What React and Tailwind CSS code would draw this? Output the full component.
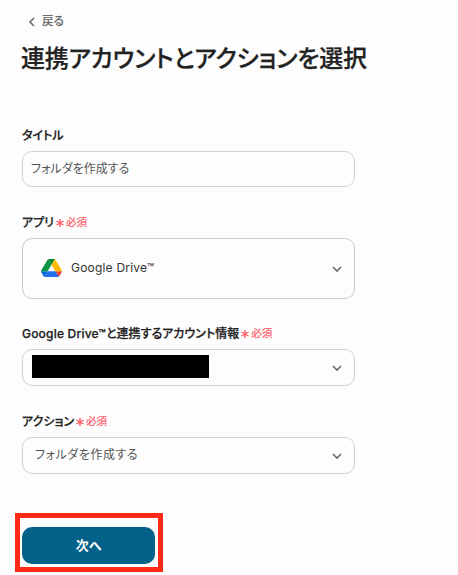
import React from "react";

const Chevron = ({ className, d }) => (
  <svg
    className={className}
    viewBox="0 0 10 10"
    fill="none"
    stroke="#6b6b6b"
    strokeWidth="1.6"
  >
    <path d={d} />
  </svg>
);

const DriveIcon = () => (
  <svg className="w-[21px] h-[18px] shrink-0 -mt-px" viewBox="0 0 87.3 78" preserveAspectRatio="none">
    <path
      d="m6.6 66.85 3.85 6.65c.8 1.4 1.95 2.5 3.3 3.3l13.75-23.8h-27.5c0 1.55.4 3.1 1.2 4.5z"
      fill="#0066da"
    />
    <path
      d="m43.65 25-13.75-23.8c-1.35.8-2.5 1.9-3.3 3.3l-25.4 44a9.06 9.06 0 0 0-1.2 4.5h27.5z"
      fill="#0b9444"
    />
    <path
      d="m73.55 76.8c1.35-.8 2.5-1.9 3.3-3.3l1.6-2.75 7.65-13.25c.8-1.4 1.2-2.95 1.2-4.5h-27.5l5.85 11.5z"
      fill="#ea4335"
    />
    <path
      d="m43.65 25 13.75-23.8c-1.35-.8-2.9-1.2-4.5-1.2h-18.5c-1.6 0-3.15.45-4.5 1.2z"
      fill="#00832d"
    />
    <path
      d="m59.8 53h-32.3l-13.75 23.8c1.35.8 2.9 1.2 4.5 1.2h50.8c1.6 0 3.15-.45 4.5-1.2z"
      fill="#2070f0"
    />
    <path
      d="m73.4 26.5-12.7-22c-.8-1.4-1.95-2.5-3.3-3.3l-13.75 23.8 16.15 28h27.45c0-1.55-.4-3.1-1.2-4.5z"
      fill="#ffba00"
    />
  </svg>
);

const Required = () => (
  <span className="flex items-center ml-[2px] text-[#ff5a66] text-[10.5px] font-normal [-webkit-text-stroke:0.2px]">
    <svg
      className="w-2 h-2 mr-[2px]"
      viewBox="0 0 8 8"
      stroke="currentColor"
      strokeWidth="1.4"
    >
      <path d="M4 0v8M.5 2l7 4M7.5 2l-7 4" />
    </svg>
    必須
  </span>
);

const Label = ({ children, required }) => (
  <div className="h-5 mt-px mb-[5px] flex items-center text-[12px] leading-5 font-medium [-webkit-text-stroke:0.25px] text-[#222] whitespace-nowrap">
    <span>{children}</span>
    {required && <Required />}
  </div>
);

const Arrow = () => (
  <Chevron className="w-[10px] h-[10px] ml-auto" d="M1 3l4 4 4-4" />
);

const App = () => {
  return (
    <main className="w-full h-[575px] overflow-hidden bg-[#fdfdfd] pl-[22px] pt-[11px] text-[#222] font-['Inter','Noto_Sans_CJK_JP',sans-serif] [font-feature-settings:'palt']">
      <div className="h-5 pl-[5px] flex items-center text-[12px] leading-5 font-medium text-[#6b6b6b] [-webkit-text-stroke:0.15px]">
        <Chevron className="w-[10px] h-[10px] mr-[5px] mt-[2px]" d="M7 1L3 5l4 4" />
        <span className="text-[11.5px]">戻る</span>
      </div>
      <h1 className="h-9 mt-[10px] mb-12 -ml-px text-[24px] leading-9 font-medium tracking-[-0.22px] [-webkit-text-stroke:0.25px] whitespace-nowrap">
        連携アカウントとアクションを選択
      </h1>

      <div className="w-[333px] flex flex-col text-[12px] text-[#555]">
        <Label>タイトル</Label>
        <div className="h-9 mb-[25px] px-[8px] flex items-center border border-[#cdd1dc] rounded-[10px]">
          <span className="-mt-px">フォルダを作成する</span>
        </div>

        <Label required>アプリ</Label>
        <div className="h-[61px] mb-6 pl-[18px] pr-3 flex items-center border border-[#c9cacd] rounded-[10px] text-[#333]">
          <DriveIcon />
          <span className="ml-[9px] -mt-px tracking-[0.2px]">Google Drive™</span>
          <Arrow />
        </div>

        <Label required>
          <span className="tracking-[0.2px]">Google Drive™</span>
          と連携するアカウント情報
        </Label>
        <div className="h-[37px] mb-[25px] pl-[9px] pr-3 flex items-center border border-[#cdd1dc] rounded-[10px]">
          <div className="w-[177px] h-[23px] mb-[3px] bg-black" />
          <Arrow />
        </div>

        <Label required>アクション</Label>
        <div className="h-[37px] pl-3 pr-3 flex items-center border border-[#cdd1dc] rounded-[10px]">
          <span className="-mt-px tracking-[0.55px]">フォルダを作成する</span>
          <Arrow />
        </div>
      </div>

      <div className="w-[148px] h-[59px] mt-[39px] -ml-[7px] flex border-[5px] border-[#ff2a16]">
        <button className="w-[133px] h-[37px] mt-[9px] ml-[2px] rounded-[10px] bg-[#03618a] text-white text-[13px] font-bold">
          次へ
        </button>
      </div>
    </main>
  );
};

export default App;
